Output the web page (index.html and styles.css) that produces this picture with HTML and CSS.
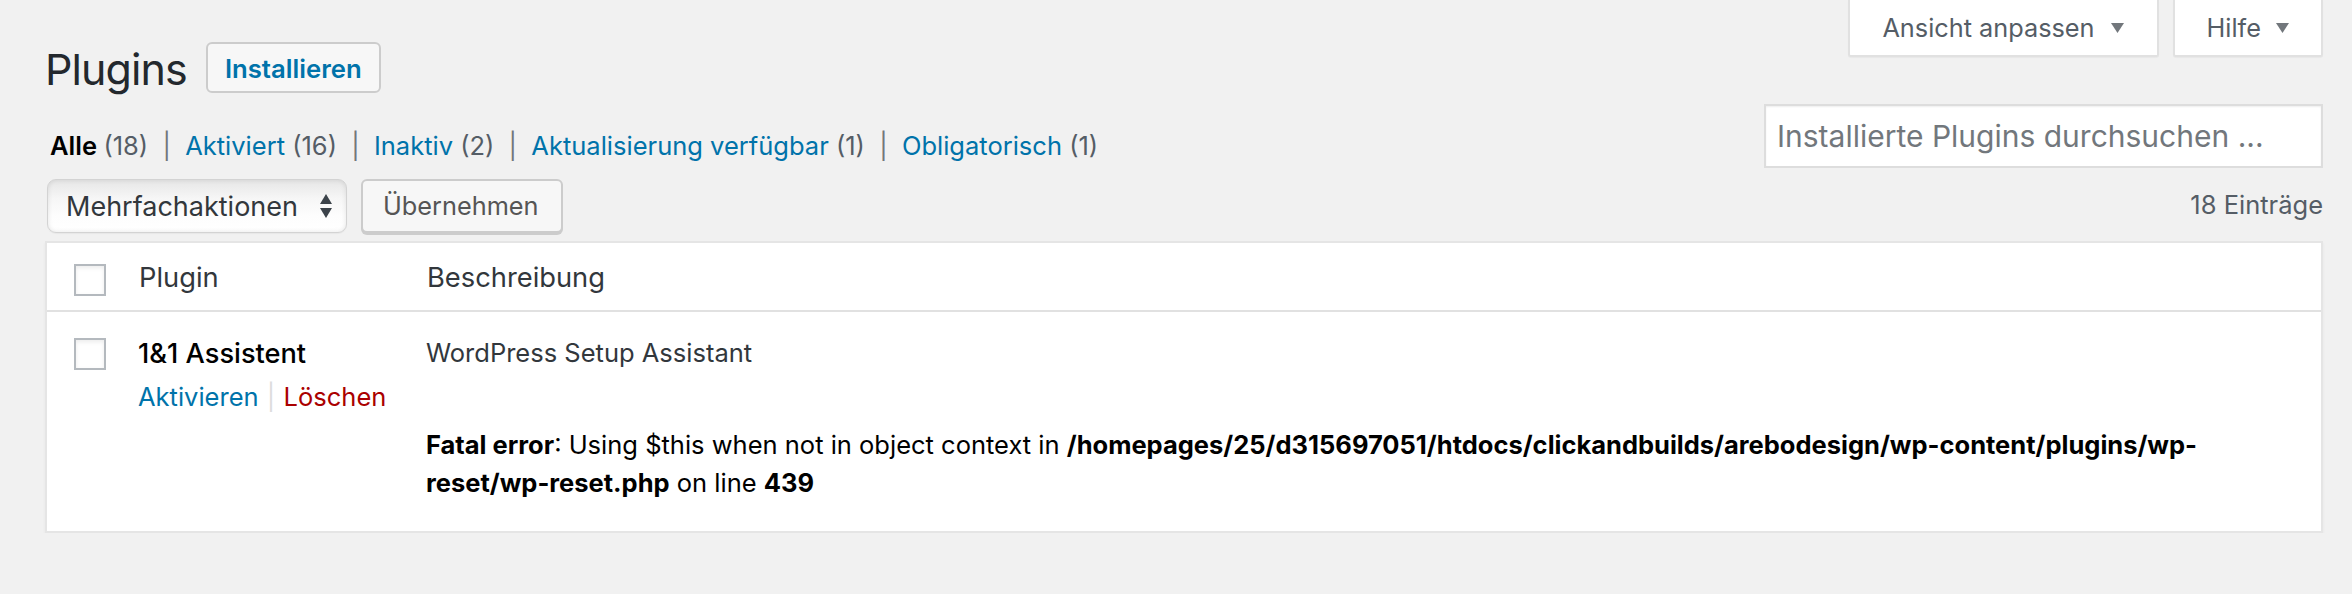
FILE: index.html
```html
<!DOCTYPE html>
<html lang="de">
<head>
<meta charset="utf-8">
<title>Plugins</title>
<link rel="stylesheet" href="styles.css">
</head>
<body>
<div class="wrap">
  <div class="meta-links">
    <button class="meta-btn" type="button">Ansicht anpassen <svg class="tri" width="13" height="10" viewBox="0 0 13 10"><polygon points="0,0 13,0 6.5,10"/></svg></button>
    <button class="meta-btn" type="button">Hilfe <svg class="tri" width="13" height="10" viewBox="0 0 13 10"><polygon points="0,0 13,0 6.5,10"/></svg></button>
  </div>

  <div class="title-row">
    <h1 class="page-title">Plugins</h1>
    <a class="title-action" href="#">Installieren</a>
  </div>

  <div class="filter-row">
    <ul class="subsubsub"><li><a class="current" href="#">Alle <span class="count">(18)</span></a><span class="sep">|</span></li><li><a href="#">Aktiviert <span class="count">(16)</span></a><span class="sep">|</span></li><li><a href="#">Inaktiv <span class="count">(2)</span></a><span class="sep">|</span></li><li><a href="#">Aktualisierung verfügbar <span class="count">(1)</span></a><span class="sep">|</span></li><li><a href="#">Obligatorisch <span class="count">(1)</span></a></li></ul>
    <div class="search-box">
      <input type="search" class="search-input" placeholder="Installierte Plugins durchsuchen ...">
    </div>
  </div>

  <div class="tablenav">
    <div class="actions">
      <div class="select">
        <span>Mehrfachaktionen</span>
        <svg class="updown" width="12" height="24" viewBox="0 0 12 24"><polygon points="6,0 12,10 0,10"/><polygon points="0,14 12,14 6,24"/></svg>
      </div>
      <button class="button" type="button">Übernehmen</button>
    </div>
    <div class="num">18 Einträge</div>
  </div>

  <div class="table">
    <div class="thead">
      <div class="cell check"><span class="checkbox"></span></div>
      <div class="cell th">Plugin</div>
      <div class="cell th">Beschreibung</div>
    </div>
    <div class="trow">
      <div class="cell check"><span class="checkbox"></span></div>
      <div class="cell plugin">
        <div class="plugin-title">1&amp;1 Assistent</div>
        <div class="row-actions"><a class="activate" href="#">Aktivieren</a><span class="bar">|</span><a class="delete" href="#">Löschen</a></div>
      </div>
      <div class="cell desc">
        <p class="desc-text">WordPress Setup Assistant</p>
        <p class="fatal"><b>Fatal error</b>: Using $this when not in object context in <b>/homepages/25/d315697051/htdocs/clickandbuilds/arebodesign/wp-content/plugins/wp-reset/wp-reset.php</b> on line <b>439</b></p>
      </div>
    </div>
  </div>
</div>
</body>
</html>
```
FILE: styles.css
```css
html, body {
  margin: 0;
  padding: 0;
  background: #f1f1f1;
}
body {
  font-family: "Inter", "Noto Sans", sans-serif;
  font-size: 25.5px;
  color: #32373c;
}
.wrap {
  margin: 0 29px 0 45px;
}

/* screen meta buttons */
.meta-links {
  display: flex;
  justify-content: flex-end;
  gap: 14px;
  height: 0;
}
.meta-btn {
  display: flex;
  align-items: center;
  gap: 16px;
  height: 57px;
  padding: 0 33px 0 32px;
  background: #fff;
  border: 2px solid #e1e1e1;
  border-top: 0;
  border-radius: 0 0 3px 3px;
  box-shadow: 0 1px 1px rgba(0,0,0,0.04);
  font-family: inherit;
  font-size: 25.3px;
  line-height: 55px;
  color: #555d66;
}
.meta-btn + .meta-btn {
  padding: 0 32px 0 32px;
  gap: 15px;
}
.tri { fill: #72777c; display: block; }

/* title */
.title-row {
  display: flex;
  align-items: flex-start;
  padding-top: 39px;
  height: 60px;
}
.page-title {
  margin: 0;
  font-size: 43px;
  letter-spacing: -0.9px;
  font-weight: 400;
  line-height: 60px;
  color: #23282d;
}
.title-action {
  margin: 3px 0 0 19px;
  padding: 3px 17px 0 17px;
  line-height: 44px;
  border: 2px solid #ccc;
  border-radius: 6px;
  background: #f7f7f7;
  color: #0073aa;
  font-weight: 600;
  font-size: 25.7px;
  text-decoration: none;
}

/* filters + search */
.filter-row {
  display: flex;
  justify-content: space-between;
  align-items: flex-start;
  margin-top: 5px;
  height: 64px;
}
.subsubsub {
  list-style: none;
  margin: 23px 0 0 5px;
  padding: 0;
  white-space: nowrap;
  line-height: 38px;
  color: #666;
}
.subsubsub li { display: inline; }
.subsubsub a {
  color: #0073aa;
  text-decoration: none;
}
.subsubsub a.current {
  color: #000;
  font-weight: 600;
}
.subsubsub .count {
  color: #555d66;
  font-weight: 400;
}
.sep {
  display: inline-block;
  width: 37px;
  text-align: center;
  color: #72777c;
}

.search-input {
  box-sizing: border-box;
  width: 559px;
  height: 64px;
  margin: 0;
  padding: 0 11px;
  border: 2px solid #ddd;
  background: #fff;
  box-shadow: inset 0 1px 2px rgba(0,0,0,0.07);
  font-family: inherit;
  font-size: 30px;
  color: #32373c;
  outline: none;
  border-radius: 0;
  -webkit-appearance: none;
  appearance: none;
}
.search-input::placeholder { color: #72777c; opacity: 1; }

/* tablenav */
.tablenav {
  display: flex;
  justify-content: space-between;
  align-items: flex-start;
  margin-top: 11px;
  height: 54px;
  margin-bottom: 8px;
}
.actions {
  display: flex;
  gap: 14px;
  margin-left: 2px;
}
.select {
  box-sizing: border-box;
  width: 300px;
  height: 54px;
  display: flex;
  align-items: center;
  justify-content: space-between;
  padding: 0 14px 0 18px;
  border: 1px solid #d3d3d3;
  border-radius: 9px;
  background: linear-gradient(#e6e6e6 0%, #f6f6f6 35%, #fdfdfd 70%, #ffffff 100%);
  box-shadow: inset 0 0 5px rgba(0,0,0,0.10), 0 1px 1px rgba(0,0,0,0.04);
  font-size: 27px;
  color: #32373c;
}
.updown { fill: #3c434a; display: block; }
.button {
  box-sizing: border-box;
  height: 54px;
  padding: 0 22px 0 20px;
  border: 2px solid #ccc;
  border-radius: 6px;
  background: #f7f7f7;
  box-shadow: 0 2px 0 #ccc;
  font-family: inherit;
  font-size: 25.3px;
  color: #555;
  line-height: 50px;
}
.num {
  margin-top: 7px;
  line-height: 38px;
  color: #555d66;
}

/* table */
.table {
  background: #fff;
  border: 2px solid #e5e5e5;
  box-shadow: 0 2px 3px rgba(0,0,0,0.05);
}
.thead, .trow {
  display: grid;
  grid-template-columns: 92px 288px 1fr;
}
.thead {
  border-bottom: 2px solid #e1e1e1;
  height: 67px;
}
.check { padding-left: 27px; }
.thead .check { padding-top: 21px; }
.trow .check { padding-top: 26px; }
.checkbox {
  display: block;
  box-sizing: border-box;
  width: 32px;
  height: 32px;
  border: 2px solid #b4b9be;
  background: #fff;
  box-shadow: inset 0 2px 4px rgba(0,0,0,0.08);
}
.th {
  padding-top: 15px;
  font-size: 27.3px;
  line-height: 40px;
  color: #32373c;
}
.trow {
  height: 219px;
}
.plugin {
  padding-top: 23px;
}
.plugin-title {
  font-size: 27.2px;
  font-weight: 500;
  line-height: 38px;
  color: #000;
  margin-left: -1px;
}
.row-actions {
  margin-top: 5px;
  line-height: 38px;
  margin-left: -1px;
  white-space: nowrap;
}
.row-actions a { text-decoration: none; }
.activate { color: #0073aa; }
.delete { color: #a00; }
.bar {
  display: inline-block;
  width: 25px;
  text-align: center;
  color: #ddd;
}
.desc {
  padding: 22px 20px 0 0;
  margin-left: -1px;
}
.desc-text {
  margin: 0;
  line-height: 38px;
  color: #32373c;
}
.fatal {
  margin: 54px 0 0 0;
  line-height: 38px;
  color: #000;
}
.fatal b { font-weight: 700; }
```
